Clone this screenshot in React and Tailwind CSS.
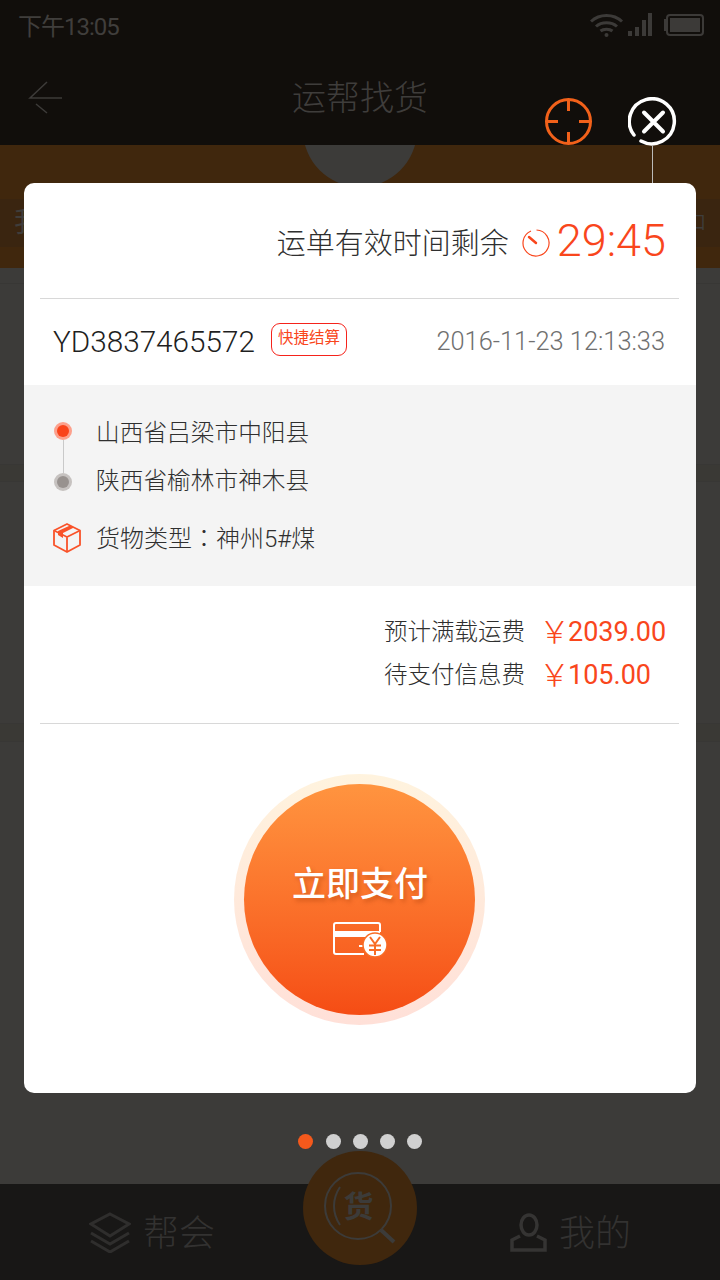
import React from 'react';

const FONT = "font-['Roboto','Noto_Sans_CJK_SC',sans-serif]";

const StatusBar = () => (
    <div className="h-[52px] flex items-center justify-between pl-[18px] pr-[15px] pt-[2px]">
        <span className="text-[24px] leading-none tracking-[-1px] text-[#403e3c]">下午13:05</span>
        <div className="flex items-center gap-[3px] -mt-[5px]">
            <svg width="34" height="26" viewBox="0 0 34 26" fill="none" stroke="#3c3a38" strokeWidth="3">
                <path d="M1 9.500C9.500 1.500 23.500 1.500 32 9.500" />
                <path d="M6 14.500C11.500 9.500 21.500 9.500 27 14.500" />
                <path d="M10.500 19C13.500 16.500 19.500 16.500 22.500 19" />
                <circle cx="16.500" cy="23" r="2" fill="#3c3a38" stroke="none" />
            </svg>
            <svg width="26" height="26" viewBox="0 0 26 26" fill="#3c3a38">
                <rect x="1" y="19" width="4" height="5" />
                <rect x="8" y="15" width="4" height="9" />
                <rect x="15" y="8" width="4" height="16" />
                <rect x="21" y="1" width="4" height="23" />
            </svg>
            <svg width="41" height="24" viewBox="0 0 41 24" fill="none" className="ml-[8px]">
                <path d="M2 7H1V17H2" stroke="#3c3a38" strokeWidth="2" />
                <rect x="3" y="2" width="36" height="20" rx="3" stroke="#3c3a38" strokeWidth="2" />
                <rect x="6" y="5" width="30" height="14" fill="#3c3a38" />
            </svg>
        </div>
    </div>
);

const Header = () => (
    <div className="relative h-[93px] flex justify-center">
        <svg className="absolute left-[28px] top-[27px]" width="36" height="36" viewBox="0 0 36 36" fill="none" stroke="#3d3b39" strokeWidth="1.500">
            <path d="M19 3L2 19H34M8 25L19 34" />
        </svg>
        <span className="mt-[22px] text-[34px] font-light leading-[48px] text-[#3f3d3b]">运帮找货</span>
    </div>
);

const BottomNav = () => (
    <div className="relative h-[96px] bg-[#181716] flex justify-between pl-[89px] pr-[89px] pt-[24px]">
        <div className="flex items-center gap-[12px] h-[48px]">
            <svg width="42" height="42" viewBox="0 0 42 42" fill="none" stroke="#2f2e2d" strokeWidth="3">
                <path d="M21 3L40 13L21 25L2 13Z" />
                <path d="M2 22L21 33L40 22" />
                <path d="M2 30L21 41L40 30" />
            </svg>
            <span className="pt-[4px] text-[36px] font-light leading-none text-[#333231]">帮会</span>
        </div>
        <div className="flex items-center gap-[12px] h-[48px]">
            <svg width="38" height="40" viewBox="0 0 38 40" fill="none" stroke="#353433" strokeWidth="3.500">
                <ellipse cx="20" cy="13" rx="8" ry="10" />
                <path d="M11 24L3 28V38H36V28L28 24" />
            </svg>
            <span className="pt-[4px] text-[36px] font-light leading-none text-[#333231]">我的</span>
        </div>
    </div>
);

const CenterButton = () => (
    <div className="absolute left-[303px] top-[1151px] w-[114px] h-[114px] rounded-full bg-[#40270d] flex items-center justify-center">
        <svg className="absolute left-[20px] top-[18px]" width="78" height="78" viewBox="0 0 78 78" fill="none" stroke="#3c3b39" strokeWidth="2">
            <circle cx="35" cy="37" r="33" />
            <path d="M17 18C9 30 9 44 17 56" />
            <path d="M58 61L71 73" strokeWidth="4" />
        </svg>
        <span className="relative -mt-[2px] -ml-[3px] text-[30px] font-bold leading-none text-[#3c3b39]">货</span>
    </div>
);

const BackdropIcons = () => (
    <>
        <svg className="absolute left-[545px] top-[98px]" width="47" height="47" viewBox="0 0 47 47" fill="none" stroke="#f2611a" strokeWidth="3">
            <circle cx="23.500" cy="23.500" r="22" />
            <path d="M23.500 2V13M23.500 34V45M2 23.500H13M34 23.500H45" />
        </svg>
        <svg className="absolute left-[628px] top-[97px]" width="50" height="50" viewBox="0 0 50 50" fill="none" stroke="#fff" strokeWidth="3.500" strokeLinecap="round">
            <path d="M6 38A22.500 22.500 0 1 1 13 44" />
            <path d="M16 15.500L35 34.500M35 15.500L16 34.500" strokeWidth="4" />
        </svg>
        <div className="absolute left-[652px] top-[145px] w-px h-[38px] bg-[#bbbbb9]" />
    </>
);

const Clock = () => (
    <svg width="28" height="28" viewBox="0 0 28 28" fill="none" stroke="#f9461c" strokeWidth="1.200">
        <path d="M14.500 1A13 13 0 1 1 9 2" />
        <path d="M7 8L14 14" strokeWidth="2.500" strokeLinecap="round" />
    </svg>
);

const RouteRow = ({ outer, inner, dotShift, children }) => (
    <div className="flex items-center h-[48px]">
        <div className={`w-[18px] h-[18px] rounded-full flex items-center justify-center ${outer} ${dotShift}`}>
            <div className={`w-[12px] h-[12px] rounded-full ${inner}`} />
        </div>
        <span className="ml-[24px] text-[23.700px] font-light leading-none text-[#2f2f2f]">{children}</span>
    </div>
);

const FeeRow = ({ label, value }) => (
    <div className="flex items-center h-[43px] justify-end">
        <span className="text-[23.500px] font-light leading-none text-[#2f2f2f]">{label}</span>
        <div className="w-[125px] ml-[17px] flex items-center text-[#f9461c]">
            <span className="w-[26px] -ml-[3px] text-[31px] font-light leading-none">￥</span>
            <span className="ml-[3px] text-[27px] leading-none">{value}</span>
        </div>
    </div>
);

const CardIcon = () => (
    <svg width="54" height="36" viewBox="0 0 54 36" fill="none" stroke="#fff">
        <path d="M31 32H3C2 32 1 31 1 30V3C1 2 2 1 3 1H45C46 1 47 2 47 3V10" strokeWidth="2" />
        <rect x="1" y="9" width="46" height="6" fill="#fff" stroke="none" />
        <path d="M26 24H30" strokeWidth="2" />
        <circle cx="42" cy="23" r="12" fill="#fff" stroke="#f86d26" strokeWidth="1.500" />
        <path d="M37 15L42 22L47 15M42 22V33M36 23.500H48M36 28H48" stroke="#f86d26" strokeWidth="2" />
    </svg>
);

const PayButton = () => (
    <div className="w-[251px] h-[251px] rounded-full bg-gradient-to-b from-[#fff3de] to-[#ffe0d8] flex items-center justify-center">
        <button className="w-[231px] h-[231px] rounded-full bg-gradient-to-b from-[#ff943f] to-[#f54c14] flex flex-col items-center">
            <span className="mt-[76px] ml-[1px] text-[34px] font-medium leading-[48px] text-white [text-shadow:2px_3px_4px_rgba(150,50,0,0.35)]">立即支付</span>
            <span className="mt-[14px] ml-[1px]"><CardIcon /></span>
        </button>
    </div>
);

const App = () => {
    return (
        <div className={`relative w-[720px] h-[1280px] overflow-hidden bg-[#3c3b39] ${FONT}`}>
            <div className="bg-[#110e0b]">
                <StatusBar />
                <Header />
            </div>
            <div className="relative h-[123px] bg-[#40270d] overflow-hidden flex justify-center">
                <div className="w-[114px] h-[114px] -mt-[72px] rounded-full bg-[#3c3b39]" />
                <div className="absolute left-0 right-0 top-[54px] h-[48px] bg-[#3a2510]" />
                <span className="absolute left-[14px] top-[64px] text-[28px] leading-none text-[#3f3d3b]">我</span>
                <span className="absolute right-[14px] top-[69px] text-[18px] leading-none text-[#3f3d3b]">口</span>
            </div>
            <div className="h-[916px] flex flex-col">
                <div className="h-[16px] border-b border-[#383735]" />
                <div className="h-[181px] border-b border-[#383735]" />
                <div className="h-[17px] border-b border-[#383735] bg-[#3a3935]" />
                <div className="h-[242px] border-b border-[#383735]" />
                <div className="h-[18px] border-b border-[#383735] bg-[#3a3935]" />
            </div>
            <BottomNav />
            <CenterButton />
            <BackdropIcons />

            <div className="absolute left-[24px] top-[183px] w-[672px] h-[910px] rounded-[10px] bg-white overflow-hidden">
                <div className="h-[116px] ml-[16px] mr-[17px] border-b border-[#d8d8d8] flex items-center justify-end pr-[13px]">
                    <span className="pt-[7px] text-[29px] font-light leading-none text-[#2f2f2f]">运单有效时间剩余</span>
                    <span className="ml-[13px] pt-[5px]"><Clock /></span>
                    <span className="ml-[7px] text-[45px] font-light leading-none text-[#f9461c]">29:45</span>
                </div>
                <div className="h-[86px] flex items-center pl-[29px] pr-[31px]">
                    <span className="w-[202px] text-[29.700px] font-light leading-none text-[#1f1f1f]">YD3837465572</span>
                    <span className="ml-[16px] -mt-[6px] w-[76px] h-[33px] rounded-[9px] border border-[#f5231b] flex items-center justify-center text-[15.500px] leading-none text-[#f9461c]">快捷结算</span>
                    <span className="ml-auto text-[25.400px] font-light leading-none text-[#707070]">2016-11-23 12:13:33</span>
                </div>
                <div className="relative h-[201px] bg-[#f4f4f4] pt-[25px] pl-[30px]">
                    <div className="absolute left-[39px] top-[55px] w-px h-[33px] bg-[#c9c9c9]" />
                    <RouteRow outer="bg-[#fca08c]" inner="bg-[#f9431a]" dotShift="-translate-y-[3px]">山西省吕梁市中阳县</RouteRow>
                    <RouteRow outer="bg-[#c6c2c0]" inner="bg-[#98928f]" dotShift="">陕西省榆林市神木县</RouteRow>
                    <div className="flex items-center h-[48px] mt-[8px] -ml-[1px]">
                        <svg width="28" height="30" viewBox="0 0 28 30" fill="none" stroke="#f9532a" strokeWidth="1.800" strokeLinejoin="round">
                            <path d="M14 1L27 7.500V22L14 29L1 22V7.500Z" />
                            <path d="M1 7.500L14 14V29M14 14L27 7.500" />
                            <path d="M5 8L17 2.500L21 4.500L10 10V15L5 12Z" fill="#f9532a" stroke="none" />
                        </svg>
                        <span className="ml-[15px] text-[24px] font-light leading-none text-[#2f2f2f]">货物类型<span className="font-['Noto_Sans_CJK_TC']">：</span>神州5#煤</span>
                    </div>
                </div>
                <div className="ml-[16px] mr-[17px] h-[138px] border-b border-[#d8d8d8] pt-[25px] pr-[12px]">
                    <FeeRow label="预计满载运费" value="2039.00" />
                    <FeeRow label="待支付信息费" value="105.00" />
                </div>
                <div className="flex justify-center pt-[50px] pr-[1px]">
                    <PayButton />
                </div>
            </div>

            <div className="absolute left-[298px] top-[1134px] flex gap-[12px]">
                <div className="w-[15px] h-[15px] mr-[1px] rounded-full bg-[#f4591c]" />
                <div className="w-[15px] h-[15px] rounded-full bg-[#d0d0d0]" />
                <div className="w-[15px] h-[15px] rounded-full bg-[#d0d0d0]" />
                <div className="w-[15px] h-[15px] rounded-full bg-[#d0d0d0]" />
                <div className="w-[15px] h-[15px] rounded-full bg-[#d0d0d0]" />
            </div>
        </div>
    );
};

export default App;
